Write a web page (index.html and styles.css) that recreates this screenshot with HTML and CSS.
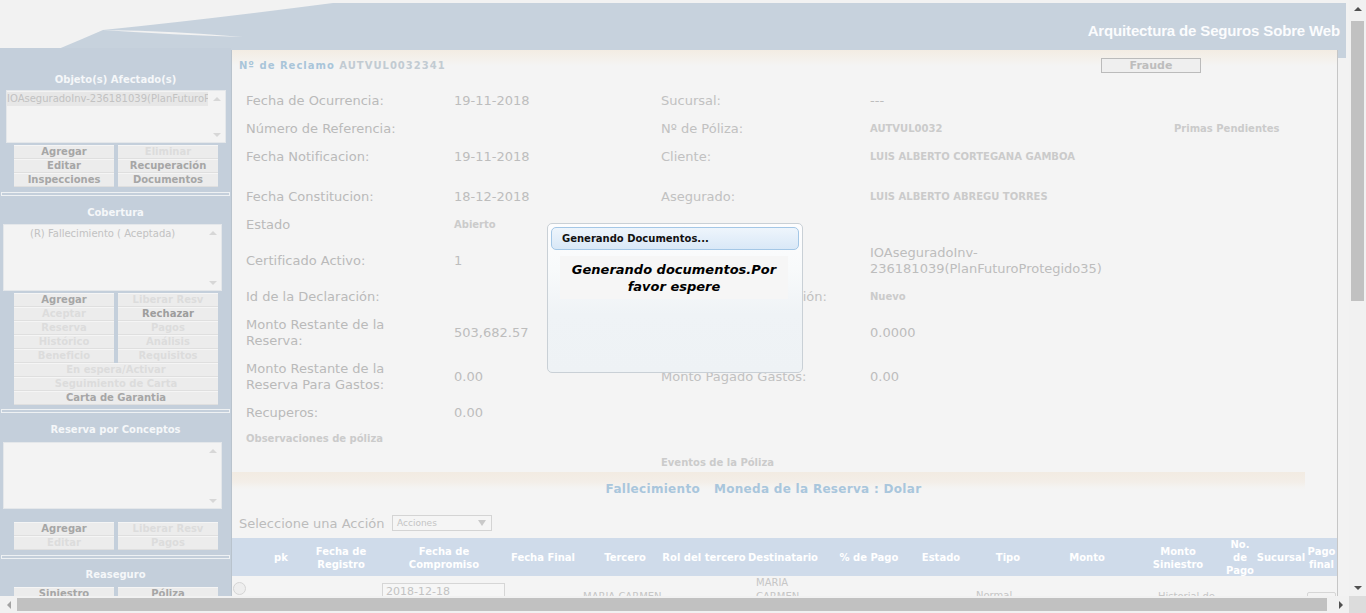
FILE: index.html
```html
<!DOCTYPE html>
<html lang="es">
<head>
<meta charset="utf-8">
<title>Reclamo AUTVUL0032341</title>
<link rel="stylesheet" href="styles.css">
</head>
<body>
<div class="viewport">
  <div class="page">
    <header class="banner">
      <svg class="swoosh" width="1349" height="58" viewBox="0 0 1349 58">
        <path d="M56 50 Q80 40 103 30 Q210 19 333 3 H1346 V58 H1338 V50 Z" fill="#c7d2dd"/>
        <path d="M103 30 Q176 31 243 37 Q174 35 103 30 Z" fill="#f2f2f2"/>
      </svg>
      <h1 class="brand">Arquitectura de Seguros Sobre Web</h1>
    </header>

    <div class="main-row">
      <aside class="sidebar">
        <h2 class="sb-title first">Objeto(s) Afectado(s)</h2>
        <div class="listbox lb-objetos">
          <div class="lb-items"><div class="lb-item selected">IOAseguradoInv-236181039(PlanFuturoProtegido35)</div></div>
          <div class="lb-scroll"><span class="tri up"></span><span class="tri down"></span></div>
        </div>
        <div class="btn-grid">
          <button class="sb-btn">Agregar</button>
          <button class="sb-btn off">Eliminar</button>
          <button class="sb-btn">Editar</button>
          <button class="sb-btn">Recuperación</button>
          <button class="sb-btn">Inspecciones</button>
          <button class="sb-btn">Documentos</button>
        </div>
        <hr class="sb-sep">

        <h2 class="sb-title t2">Cobertura</h2>
        <div class="listbox lb-tall">
          <div class="lb-items"><div class="lb-item indent">(R) Fallecimiento ( Aceptada)</div></div>
          <div class="lb-scroll"><span class="tri up"></span><span class="tri down"></span></div>
        </div>
        <div class="btn-grid">
          <button class="sb-btn">Agregar</button>
          <button class="sb-btn off">Liberar Resv</button>
          <button class="sb-btn off">Aceptar</button>
          <button class="sb-btn dark">Rechazar</button>
          <button class="sb-btn off">Reserva</button>
          <button class="sb-btn off">Pagos</button>
          <button class="sb-btn off">Histórico</button>
          <button class="sb-btn off">Análisis</button>
          <button class="sb-btn off">Beneficio</button>
          <button class="sb-btn off">Requisitos</button>
          <button class="sb-btn off wide">En espera/Activar</button>
          <button class="sb-btn off wide">Seguimiento de Carta</button>
          <button class="sb-btn wide">Carta de Garantia</button>
        </div>
        <hr class="sb-sep s2">

        <h2 class="sb-title t3">Reserva por Conceptos</h2>
        <div class="listbox lb-tall lb-conceptos">
          <div class="lb-items"></div>
          <div class="lb-scroll"><span class="tri up"></span><span class="tri down"></span></div>
        </div>
        <div class="btn-grid g3">
          <button class="sb-btn">Agregar</button>
          <button class="sb-btn off">Liberar Resv</button>
          <button class="sb-btn off">Editar</button>
          <button class="sb-btn off">Pagos</button>
        </div>
        <hr class="sb-sep">

        <h2 class="sb-title t4">Reaseguro</h2>
        <div class="btn-grid g4">
          <button class="sb-btn">Siniestro</button>
          <button class="sb-btn">Póliza</button>
        </div>
      </aside>

      <main class="panel">
        <div class="claim-head">
          <div class="claim-no"><span class="cn-label">Nº de Reclamo</span> <span class="cn-value">AUTVUL0032341</span></div>
          <button class="fraude">Fraude</button>
        </div>

        <div class="form">
          <div class="frow"><span class="lbl">Fecha de Ocurrencia:</span><span class="val">19-11-2018</span><span class="lbl r">Sucursal:</span><span class="val">---</span></div>
          <div class="frow"><span class="lbl">Número de Referencia:</span><span class="val"></span><span class="lbl r">Nº de Póliza:</span><span class="val b">AUTVUL0032</span><span class="val b">Primas Pendientes</span></div>
          <div class="frow"><span class="lbl">Fecha Notificacion:</span><span class="val">19-11-2018</span><span class="lbl r">Cliente:</span><span class="val b">LUIS ALBERTO CORTEGANA GAMBOA</span></div>
          <div class="frow extra"><span class="lbl">Fecha Constitucion:</span><span class="val">18-12-2018</span><span class="lbl r">Asegurado:</span><span class="val b">LUIS ALBERTO ABREGU TORRES</span></div>
          <div class="frow"><span class="lbl">Estado</span><span class="val b">Abierto</span></div>
          <div class="frow"><span class="lbl">Certificado Activo:</span><span class="val">1</span><span class="lbl r"></span><span class="val">IOAseguradoInv-<br>236181039(PlanFuturoProtegido35)</span></div>
          <div class="frow"><span class="lbl">Id de la Declaración:</span><span class="val"></span><span class="lbl r">Estado de la Declaración:</span><span class="val b">Nuevo</span></div>
          <div class="frow"><span class="lbl">Monto Restante de la Reserva:</span><span class="val">503,682.57</span><span class="lbl r"></span><span class="val">0.0000</span></div>
          <div class="frow"><span class="lbl">Monto Restante de la Reserva Para Gastos:</span><span class="val">0.00</span><span class="lbl r">Monto Pagado Gastos:</span><span class="val">0.00</span></div>
          <div class="frow"><span class="lbl">Recuperos:</span><span class="val">0.00</span></div>
          <div class="frow obs"><span class="lbl b">Observaciones de póliza</span></div>
          <div class="frow eventos"><span></span><span></span><span class="lbl b">Eventos de la Póliza</span></div>
        </div>

        <div class="band"><span>Fallecimiento</span><span>Moneda de la Reserva : Dolar</span></div>

        <div class="action">
          <span class="action-label">Seleccione una Acción</span>
          <div class="select"><span>Acciones</span><span class="sel-arrow"></span></div>
        </div>

        <div class="grid-head cols">
          <div></div>
          <div>pk</div>
          <div>Fecha de<br>Registro</div>
          <div>Fecha de<br>Compromiso</div>
          <div>Fecha Final</div>
          <div>Tercero</div>
          <div>Rol del tercero</div>
          <div>Destinatario</div>
          <div>% de Pago</div>
          <div>Estado</div>
          <div>Tipo</div>
          <div>Monto</div>
          <div>Monto<br>Siniestro</div>
          <div>No.<br>de<br>Pago</div>
          <div>Sucursal</div>
          <div>Pago<br>final</div>
        </div>
        <div class="grid-row cols">
          <div class="c-radio"><span class="radio"></span></div>
          <div></div>
          <div></div>
          <div class="c-date"><span class="date-input">2018-12-18</span></div>
          <div></div>
          <div class="c-tercero">MARIA CARMEN</div>
          <div></div>
          <div class="c-dest">MARIA<br>CARMEN</div>
          <div></div>
          <div></div>
          <div class="c-tipo">Normal</div>
          <div></div>
          <div class="c-hist">Historial de</div>
          <div></div>
          <div></div>
          <div class="c-btn"><span class="mini-btn"></span></div>
        </div>
      </main>
    </div>
  </div>

  <div class="vscroll">
    <div class="sb-arrow"><span class="arr a-up"></span></div>
    <div class="vthumb"></div>
    <div class="vspace"></div>
    <div class="sb-arrow"><span class="arr a-down"></span></div>
  </div>
  <div class="hscroll">
    <div class="sb-arrow"><span class="arr a-left"></span></div>
    <div class="hthumb"></div>
    <div class="sb-arrow"><span class="arr a-right"></span></div>
  </div>
  <div class="corner"></div>

  <div class="modal">
    <div class="modal-title">Generando Documentos...</div>
    <div class="modal-body">Generando documentos.Por<br>favor espere</div>
  </div>
</div>
</body>
</html>
```
FILE: styles.css
```css
* { box-sizing: border-box; margin: 0; padding: 0; }
html, body { width: 1366px; height: 613px; overflow: hidden; }
body {
  font-family: "DejaVu Sans", Verdana, sans-serif;
  background: #f1f1f1;
  color: #bcbcbc;
}
button { font-family: inherit; border: 0; }

.viewport {
  position: relative;
  display: grid;
  grid-template-columns: 1349px 17px;
  grid-template-rows: 596px 17px;
  width: 1366px;
  height: 613px;
}
.page { overflow: hidden; background: #f2f2f2; }

/* banner */
.banner { display: grid; height: 48px; }
.banner > * { grid-area: 1 / 1; }
.swoosh { display: block; overflow: visible; }
.brand {
  justify-self: end;
  align-self: start;
  margin: 23px 9px 0 0;
  font: bold 15px/16px "Liberation Sans", Arial, sans-serif;
  letter-spacing: -0.15px;
  color: #fbfcfd;
  position: relative;
}

.main-row {
  display: grid;
  grid-template-columns: 231px 1107px;
  align-items: start;
}

/* sidebar */
.sidebar {
  background: #c4cfdb;
  height: 560px;
  display: flex;
  flex-direction: column;
  align-items: flex-start;
}
.sidebar > * { flex-shrink: 0; }
.sb-title {
  align-self: stretch;
  text-align: center;
  font-size: 10px;
  line-height: 14px;
  font-weight: bold;
  color: #f5f7f9;
}
.sb-title.first { margin-top: 25px; }
.sb-title.t2 { margin-top: 10px; }
.sb-title.t3 { margin-top: 10px; }
.sb-title.t4 { margin-top: 9px; }

.listbox {
  display: flex;
  background: #f3f3f3;
  border: 1px solid #e4e7ea;
  margin-top: 4px;
}
.lb-objetos { width: 220px; height: 53px; margin-left: 6px; margin-top: 3px; }
.lb-tall { width: 219px; height: 67px; margin-left: 3px; }
.lb-conceptos { margin-top: 5px; }
.lb-items { flex: 1; overflow: hidden; padding-top: 1px; }
.lb-item {
  font-size: 10px;
  line-height: 14px;
  white-space: nowrap;
  color: #c2c2c2;
  overflow: hidden;
}
.lb-item.selected { background: #e7e7e7; }
.lb-item.indent { padding-left: 26px; padding-top: 1px; }
.lb-scroll {
  width: 17px;
  display: flex;
  flex-direction: column;
  justify-content: space-between;
  align-items: center;
  padding: 6px 0 5px;
}
.tri { width: 0; height: 0; border-left: 4px solid transparent; border-right: 4px solid transparent; }
.tri.up { border-bottom: 4px solid #d7d7d7; }
.tri.down { border-top: 4px solid #d7d7d7; }

.btn-grid {
  display: grid;
  grid-template-columns: 100px 100px;
  column-gap: 4px;
  margin: 2px 0 0 14px;
}
.btn-grid.g3 { margin-top: 13px; }
.btn-grid.g4 { margin-top: 5px; }
.sb-btn {
  height: 14px;
  background: #ececec;
  border-top: 1px solid #f5f5f5;
  border-bottom: 1px solid #dfdfdf;
  font-size: 10px;
  line-height: 12px;
  font-weight: bold;
  color: #a6a6a6;
  text-align: center;
  white-space: nowrap;
}
.sb-btn.dark { color: #9d9d9d; }
.sb-btn.off { color: #dcdcdc; }
.sb-btn.wide { grid-column: 1 / -1; }

.sb-sep {
  align-self: stretch;
  margin: 5px 1px 0;
  height: 4px;
  border: 1px solid #eef1f3;
  background: #c4cfdb;
}
.sb-sep.s2 { margin-top: 4px; }

/* main panel */
.panel {
  margin-top: 2px;
  height: 560px;
  background: linear-gradient(#f3ece3 0, #f4f1ec 9px, #f4f4f4 16px);
  border-left: 1px solid #b9c3cd;
  border-right: 1px solid #c6c6c6;
  position: relative;
}
.claim-head {
  display: flex;
  justify-content: space-between;
  align-items: center;
  height: 15px;
  margin-top: 8px;
  padding: 0 136px 0 7px;
}
.claim-no {
  font-size: 10px;
  font-weight: bold;
  letter-spacing: 1px;
  white-space: nowrap;
}
.cn-label { color: #a9c5d9; }
.cn-value { color: #c2cbd2; }
.fraude {
  width: 100px;
  height: 15px;
  border: 1px solid #bbbbbb;
  background: #efefef;
  font-size: 11px;
  line-height: 13px;
  font-weight: bold;
  color: #bdbdbd;
}

.form {
  display: flex;
  flex-direction: column;
  gap: 12px;
  margin-top: 20px;
  padding-left: 14px;
}
.frow {
  display: grid;
  grid-template-columns: 208px 207px 209px 304px auto;
  align-items: center;
  min-height: 16px;
  font-size: 13px;
  line-height: 16px;
}
.frow.extra { margin-top: 12px; }
.frow.obs { margin-top: -2px; }
.frow.eventos { margin-top: -4px; }
.lbl { color: #bababa; padding-right: 18px; }
.lbl.r { color: #c1c1c1; white-space: nowrap; }
.val { color: #bdbdbd; white-space: nowrap; }
.b { font-size: 10px; font-weight: bold; color: #cbcbcb; }

.band {
  margin-top: 1px;
  width: 1073px;
  height: 34px;
  padding-right: 10px;
  display: flex;
  justify-content: center;
  align-items: center;
  gap: 14px;
  background: linear-gradient(#f2ebe2 0, #f3eee8 10px, #f4f3f1 15px, #f4f4f4 18px);
  font-size: 12px;
  font-weight: bold;
  letter-spacing: 0.3px;
  color: #a9c6dc;
}

.action {
  display: flex;
  align-items: center;
  height: 16px;
  margin-top: 9px;
  padding-left: 7px;
  font-size: 13px;
  color: #bcbcbc;
}
.action-label { width: 153px; white-space: nowrap; }
.select {
  width: 100px;
  height: 16px;
  border: 1px solid #d4d4d4;
  background: #f5f5f5;
  display: flex;
  align-items: center;
  justify-content: space-between;
  padding: 0 5px 0 4px;
  font-size: 9px;
  color: #c4c4c4;
}
.sel-arrow { width: 0; height: 0; border-left: 4px solid transparent; border-right: 4px solid transparent; border-top: 6px solid #c9c9c9; }

.cols {
  display: grid;
  grid-template-columns: 28px 42px 78px 128px 70px 94px 64px 94px 78px 66px 68px 90px 92px 32px 50px 31px;
}
.grid-head {
  margin-top: 7px;
  height: 38px;
  background: #cfdbea;
  color: #ffffff;
  font-size: 10px;
  line-height: 13px;
  font-weight: bold;
}
.grid-head > div {
  display: flex;
  align-items: center;
  justify-content: center;
  text-align: center;
  white-space: nowrap;
}
.grid-row {
  height: 44px;
  font-size: 10px;
  line-height: 14px;
  color: #c6c6c6;
}
.grid-row > div { white-space: nowrap; }
.c-radio { padding: 6px 0 0 1px; }
.radio { display: block; width: 13px; height: 13px; border-radius: 50%; border: 1px solid #d5d5d5; background: #eeeeee; }
.c-date { padding: 7px 0 0 2px; }
.date-input { display: block; width: 123px; height: 18px; border: 1px solid #d6d6d6; background: #f6f6f6; padding-left: 3px; line-height: 15px; font-size: 11px; color: #c3c3c3; }
.c-tercero { padding: 14px 0 0 5px; }
.c-dest { padding: 0 0 0 20px; line-height: 14px; }
.c-tipo { padding: 13px 0 0 2px; }
.c-hist { padding: 14px 0 0 26px; }
.c-btn { padding: 16px 0 0 1px; }
.mini-btn { display: block; width: 29px; height: 14px; border: 1px solid #d6d6d6; border-radius: 2px; background: #f3f3f3; }

/* scrollbars */
.vscroll {
  background: #f1f1f1;
  display: flex;
  flex-direction: column;
  align-items: center;
}
.sb-arrow { width: 17px; height: 17px; flex: none; display: flex; align-items: center; justify-content: center; }
.vthumb { width: 13px; height: 280px; margin-top: 4px; background: #c1c1c1; flex: none; }
.vspace { flex: 1; }
.hscroll {
  grid-column: 1;
  grid-row: 2;
  background: #f1f1f1;
  display: flex;
  align-items: center;
}
.hthumb { height: 13px; width: 1310px; background: #c1c1c1; flex: none; }
.hscroll .sb-arrow:last-child { margin-left: auto; }
.corner { background: #dcdcdc; }
.arr { width: 0; height: 0; }
.a-up { border-left: 4px solid transparent; border-right: 4px solid transparent; border-bottom: 4px solid #505050; }
.a-down { border-left: 4px solid transparent; border-right: 4px solid transparent; border-top: 4px solid #505050; }
.a-left { border-top: 4px solid transparent; border-bottom: 4px solid transparent; border-right: 4px solid #a3a3a3; }
.a-right { border-top: 4px solid transparent; border-bottom: 4px solid transparent; border-left: 4px solid #505050; }

/* modal */
.modal {
  position: absolute;
  left: 547px;
  top: 223px;
  width: 256px;
  height: 150px;
  border: 1px solid #c9d0d6;
  border-radius: 5px;
  background: linear-gradient(#fdfdfe 0, #f8fafb 45px, #eff3f6 90px, #eef2f5 100%);
  padding: 3px 3px 0;
}
.modal-title {
  height: 23px;
  border: 1px solid #a4c7e6;
  border-radius: 5px;
  background: linear-gradient(#eef5fc, #d9e8f7);
  font-size: 10px;
  font-weight: bold;
  color: #111111;
  padding-left: 10px;
  display: flex;
  align-items: center;
}
.modal-body {
  margin: 6px 11px 0 9px;
  height: 43px;
  background: #f6f6f6;
  padding-top: 5px;
  text-align: center;
  font-size: 13px;
  line-height: 17px;
  font-weight: bold;
  font-style: italic;
  color: #000000;
}
```
